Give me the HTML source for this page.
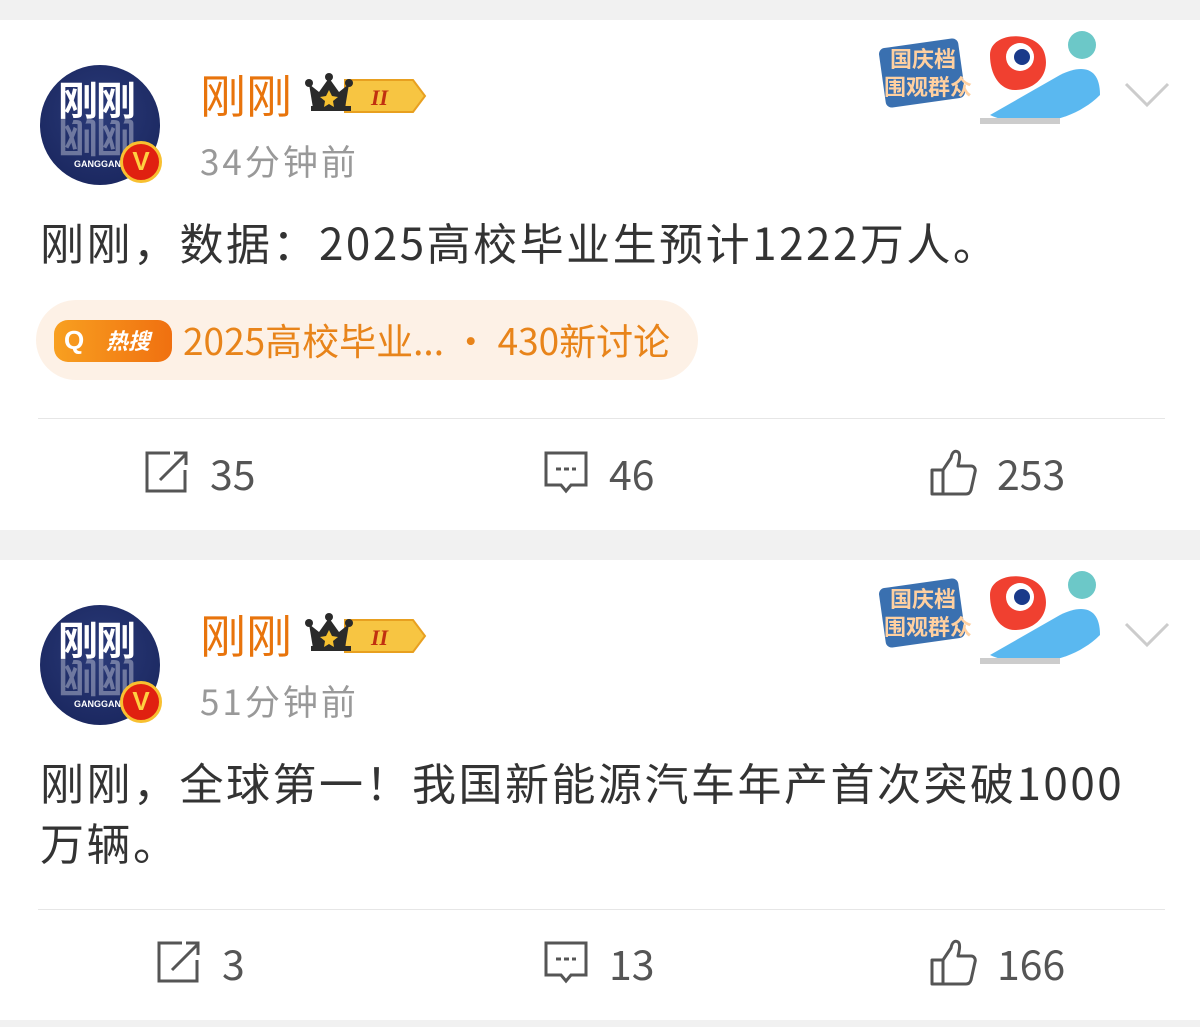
<!DOCTYPE html>
<html><head><meta charset="utf-8"><style>
*{margin:0;padding:0;box-sizing:border-box}
body{width:1200px;height:1027px;background:#f1f1f1;font-family:"Noto Sans CJK SC","Liberation Sans",sans-serif;position:relative;overflow:hidden}
.card{position:absolute;left:0;width:1200px;background:#fff}
.ab{position:absolute}
.av{position:absolute;left:40px;width:120px;height:120px;border-radius:50%;background:radial-gradient(circle at 50% 40%,#2a3a78,#17235a);overflow:hidden}
.av .t{position:absolute;left:18px;top:4px;font-size:40px;font-weight:bold;color:#fff;letter-spacing:-2px}
.av .t2{position:absolute;left:18px;top:46px;font-size:40px;font-weight:bold;color:rgba(255,255,255,.35);letter-spacing:-2px;transform:scaleY(-1)}
.av .g{position:absolute;left:34px;top:94px;font-size:9px;color:#fff;font-weight:bold;font-family:"Liberation Sans",sans-serif}
.v{position:absolute;width:42px;height:42px;border-radius:50%;background:#e02010;border:3px solid #f8c030;color:#ffd040;font-weight:bold;font-size:26px;text-align:center;line-height:34px;font-family:"Liberation Sans",sans-serif}
.name{position:absolute;left:200px;font-size:46px;color:#e8740c;line-height:60px}
.time{position:absolute;left:200px;font-size:35px;color:#999;line-height:50px;letter-spacing:3px}
.txt{position:absolute;left:40px;font-size:44px;color:#333;line-height:60px;width:1160px;white-space:nowrap;letter-spacing:2.5px}
.line{position:absolute;left:38px;width:1127px;height:1px;background:#e6e6e6}
.act{position:absolute;font-size:41px;color:#555;display:flex;align-items:center;gap:20px;line-height:50px}
.badge{position:absolute;left:305px;width:122px;height:44px}
.deco{position:absolute;left:870px;width:245px;height:110px}
.chev{position:absolute;left:1124px;width:46px;height:30px}
</style></head><body>

<div class="card" style="top:20px;height:510px">
  <div class="av" style="top:45px"><div class="t">刚刚</div><div class="t2">刚刚</div><div class="g">GANGGAN</div></div>
  <div class="v" style="left:120px;top:121px">V</div>
  <div class="name" style="top:44px">刚刚</div>
  <svg class="badge" style="top:52px" viewBox="0 0 122 44"><path d="M40 8h68l12 16-12 16H40z" fill="#f7c542" stroke="#e8a020" stroke-width="2"/><text x="66" y="33" font-size="22" font-weight="bold" font-style="italic" fill="#c03010" font-family="Liberation Serif,serif">II</text><path d="M4 12l10 8 10-14 10 14 10-8-4 24H8z" fill="#2a2a2a"/><circle cx="4" cy="11" r="4" fill="#2a2a2a"/><circle cx="24" cy="5" r="4" fill="#2a2a2a"/><circle cx="44" cy="11" r="4" fill="#2a2a2a"/><rect x="6" y="34" width="40" height="5" fill="#2a2a2a"/><path d="M24 18l3 6 6 1-5 4 1 6-5-3-5 3 1-6-5-4 6-1z" fill="#f5c030"/></svg>
  <div class="time" style="top:116px">34分钟前</div>
  <svg class="deco" style="top:5px" viewBox="0 0 245 110"><rect x="12" y="18" width="80" height="60" rx="6" fill="#3a70b0" transform="rotate(-8 52 48)"/><text x="20" y="42" font-size="22" font-weight="bold" fill="#ffd0a0" font-family="Noto Sans CJK SC">国庆档</text><text x="14" y="70" font-size="22" font-weight="bold" fill="#ffd0a0" font-family="Noto Sans CJK SC">围观群众</text><path d="M120 90c30 14 80 10 110-20 0-30-20-30-40-20z" fill="#5ab8f0"/><path d="M120 30c0-25 50-25 55 0 5 20-10 35-30 35-15 0-25-15-25-35z" fill="#f04030"/><circle cx="150" cy="32" r="14" fill="#fff"/><circle cx="152" cy="32" r="8" fill="#1a3a8a"/><circle cx="212" cy="20" r="14" fill="#6cc8c8"/><path d="M110 96h80" stroke="#ccc" stroke-width="6"/></svg>
  <svg class="chev" style="top:60px" viewBox="0 0 46 30"><path d="M2 4l21 21 21-21" fill="none" stroke="#ccc" stroke-width="3"/></svg>
  <div class="txt" style="top:191px">刚刚，数据：2025高校毕业生预计1222万人。</div>
  <div class="ab" style="left:36px;top:280px;width:662px;height:80px;border-radius:40px;background:#fdf1e6"></div>
  <div class="ab" style="left:54px;top:300px;width:118px;height:42px;border-radius:14px;background:linear-gradient(90deg,#f8a020,#f07010)"></div>
  <div class="ab" style="left:64px;top:300px;font-size:26px;color:#fff;font-weight:bold;font-family:'Liberation Sans',sans-serif;line-height:40px">Q</div>
  <div class="ab" style="left:106px;top:300px;font-size:22px;color:#fff;font-weight:bold;font-style:italic;line-height:40px">热搜</div>
  <div class="ab" style="left:183px;top:292px;font-size:37px;color:#e8841a;line-height:54px">2025高校毕业... · 430新讨论</div>
  <div class="line" style="top:398px"></div>
  <div class="act" style="left:144px;top:427px"><svg width="46" height="44" viewBox="0 0 46 44"><path d="M26 3H3v38h38V20" fill="none" stroke="#555" stroke-width="3"/><path d="M16 30L42 4M30 3h12v12" fill="none" stroke="#555" stroke-width="3"/></svg>35</div>
  <div class="act" style="left:543px;top:427px"><svg width="46" height="44" viewBox="0 0 46 44"><path d="M3 3h40v32H28l-5 6-5-6H3z" fill="none" stroke="#555" stroke-width="3"/><path d="M13 19h20" stroke="#555" stroke-width="3" stroke-dasharray="5 3"/></svg>46</div>
  <div class="act" style="left:929px;top:427px"><svg width="48" height="48" viewBox="0 0 48 48"><path d="M3 22h11v24H3zM14 22l8-12c1-6 4-8 7-6 3 2 1 10 0 14h13c3 0 5 3 4 6l-4 18c-1 3-3 4-5 4H14" fill="none" stroke="#555" stroke-width="3" stroke-linejoin="round"/></svg>253</div>
</div>

<div class="card" style="top:560px;height:460px">
  <div class="av" style="top:45px"><div class="t">刚刚</div><div class="t2">刚刚</div><div class="g">GANGGAN</div></div>
  <div class="v" style="left:120px;top:121px">V</div>
  <div class="name" style="top:44px">刚刚</div>
  <svg class="badge" style="top:52px" viewBox="0 0 122 44"><path d="M40 8h68l12 16-12 16H40z" fill="#f7c542" stroke="#e8a020" stroke-width="2"/><text x="66" y="33" font-size="22" font-weight="bold" font-style="italic" fill="#c03010" font-family="Liberation Serif,serif">II</text><path d="M4 12l10 8 10-14 10 14 10-8-4 24H8z" fill="#2a2a2a"/><circle cx="4" cy="11" r="4" fill="#2a2a2a"/><circle cx="24" cy="5" r="4" fill="#2a2a2a"/><circle cx="44" cy="11" r="4" fill="#2a2a2a"/><rect x="6" y="34" width="40" height="5" fill="#2a2a2a"/><path d="M24 18l3 6 6 1-5 4 1 6-5-3-5 3 1-6-5-4 6-1z" fill="#f5c030"/></svg>
  <div class="time" style="top:116px">51分钟前</div>
  <svg class="deco" style="top:5px" viewBox="0 0 245 110"><rect x="12" y="18" width="80" height="60" rx="6" fill="#3a70b0" transform="rotate(-8 52 48)"/><text x="20" y="42" font-size="22" font-weight="bold" fill="#ffd0a0" font-family="Noto Sans CJK SC">国庆档</text><text x="14" y="70" font-size="22" font-weight="bold" fill="#ffd0a0" font-family="Noto Sans CJK SC">围观群众</text><path d="M120 90c30 14 80 10 110-20 0-30-20-30-40-20z" fill="#5ab8f0"/><path d="M120 30c0-25 50-25 55 0 5 20-10 35-30 35-15 0-25-15-25-35z" fill="#f04030"/><circle cx="150" cy="32" r="14" fill="#fff"/><circle cx="152" cy="32" r="8" fill="#1a3a8a"/><circle cx="212" cy="20" r="14" fill="#6cc8c8"/><path d="M110 96h80" stroke="#ccc" stroke-width="6"/></svg>
  <svg class="chev" style="top:60px" viewBox="0 0 46 30"><path d="M2 4l21 21 21-21" fill="none" stroke="#ccc" stroke-width="3"/></svg>
  <div class="txt" style="top:191px">刚刚，全球第一！我国新能源汽车年产首次突破1000<br>万辆。</div>
  <div class="line" style="top:349px"></div>
  <div class="act" style="left:156px;top:377px"><svg width="46" height="44" viewBox="0 0 46 44"><path d="M26 3H3v38h38V20" fill="none" stroke="#555" stroke-width="3"/><path d="M16 30L42 4M30 3h12v12" fill="none" stroke="#555" stroke-width="3"/></svg>3</div>
  <div class="act" style="left:543px;top:377px"><svg width="46" height="44" viewBox="0 0 46 44"><path d="M3 3h40v32H28l-5 6-5-6H3z" fill="none" stroke="#555" stroke-width="3"/><path d="M13 19h20" stroke="#555" stroke-width="3" stroke-dasharray="5 3"/></svg>13</div>
  <div class="act" style="left:929px;top:377px"><svg width="48" height="48" viewBox="0 0 48 48"><path d="M3 22h11v24H3zM14 22l8-12c1-6 4-8 7-6 3 2 1 10 0 14h13c3 0 5 3 4 6l-4 18c-1 3-3 4-5 4H14" fill="none" stroke="#555" stroke-width="3" stroke-linejoin="round"/></svg>166</div>
</div>
</body></html>
